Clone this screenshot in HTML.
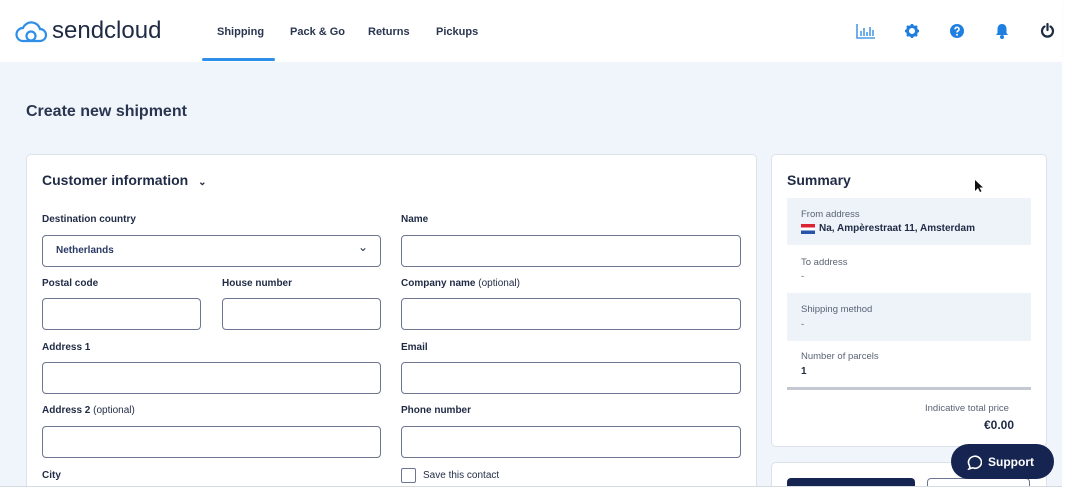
<!DOCTYPE html>
<html><head><meta charset="utf-8"><style>
*{box-sizing:border-box;margin:0;padding:0}
body{width:1073px;height:495px;overflow:hidden;background:#fff;font-family:"Liberation Sans",sans-serif;color:#1f2a44;position:relative}
.hdr{position:absolute;left:0;top:0;width:1062px;height:62px;background:#fff;box-shadow:0 1px 2px rgba(0,0,0,.05)}
.main{position:absolute;left:0;top:62px;width:1062px;height:425px;background:#f0f5fb;border-bottom:1px solid #d5d9e0;overflow:hidden}
.abs{position:absolute}
.nav{position:absolute;top:26px;font-size:11px;font-weight:bold;color:#2a3550}
.card{position:absolute;background:#fff;border:1px solid #dde2ea;border-radius:5px}
.lbl{position:absolute;font-size:10px;font-weight:bold;color:#1f2a44}
.lbl span{font-weight:normal}
.in{position:absolute;height:32px;border:1.5px solid #6d7690;border-radius:4px;background:#fff}
.sm{position:absolute;font-size:9.5px;color:#5a6275}
.sv{position:absolute;font-size:10px;font-weight:bold;color:#1f2a44}
</style></head><body>
<div class="hdr">
<svg class="abs" style="left:15px;top:21px" width="32" height="22" viewBox="0 0 32 22"><path d="M8 20 H25 A6 6 0 0 0 25 8 A9 9 0 0 0 8 7 A6.5 6.5 0 0 0 8 20 Z" fill="none" stroke="#2f8fe8" stroke-width="2.2"/><circle cx="16" cy="15" r="4.5" fill="none" stroke="#2f8fe8" stroke-width="2.2"/></svg>
<div class="abs" style="left:52px;top:17px;font-size:24px;color:#1f2a44">sendcloud</div>
<div class="nav" style="left:217px">Shipping</div>
<div class="nav" style="left:290px">Pack &amp; Go</div>
<div class="nav" style="left:368px">Returns</div>
<div class="nav" style="left:436px">Pickups</div>
<div class="abs" style="left:202px;top:58px;width:73px;height:3px;background:#2f8fe8;border-radius:2px"></div>
<svg class="abs" style="left:856px;top:23px" width="20" height="16" viewBox="0 0 20 16"><path d="M1 1V15H19M5 13V8M8 13V5M11 13V9M14 13V4M17 13V7" stroke="#4a9be8" stroke-width="1.6" fill="none"/></svg>
<svg class="abs" style="left:905px;top:24px" width="14" height="14" viewBox="0 0 14 14"><circle cx="7" cy="7" r="4.5" fill="none" stroke="#1f7fe0" stroke-width="3"/><path d="M7 0V3M7 11V14M0 7H3M11 7H14M2 2L4 4M10 10L12 12M12 2L10 4M2 12L4 10" stroke="#1f7fe0" stroke-width="2.4"/></svg>
<svg class="abs" style="left:950px;top:24px" width="14" height="14" viewBox="0 0 14 14"><circle cx="7" cy="7" r="7" fill="#1f7fe0"/><path d="M5 5.3A2 2 0 1 1 7.5 7.2C7 7.5 7 8 7 8.5" stroke="#fff" stroke-width="1.6" fill="none"/><circle cx="7" cy="10.8" r="1" fill="#fff"/></svg>
<svg class="abs" style="left:995px;top:23px" width="14" height="16" viewBox="0 0 14 16"><path d="M7 1C4 1 2.5 3.5 2.5 6V10L1 12H13L11.5 10V6C11.5 3.5 10 1 7 1Z" fill="#1f7fe0"/><circle cx="7" cy="14" r="2" fill="#1f7fe0"/></svg>
<svg class="abs" style="left:1040px;top:23px" width="15" height="15" viewBox="0 0 15 15"><path d="M4.5 3.5A5.5 5.5 0 1 0 10.5 3.5M7.5 1V7" stroke="#1f2a44" stroke-width="2.2" fill="none" stroke-linecap="round"/></svg>
</div>
<div class="main">
<div class="abs" style="left:26px;top:41px;font-size:16px;font-weight:bold;color:#2a3550">Create new shipment</div>
<div class="card" style="left:26px;top:92px;width:731px;height:360px">
<div class="abs" style="left:15px;top:17px;font-size:14px;font-weight:bold">Customer information <span style="font-size:10px;margin-left:6px">⌄</span></div>
</div>
<div class="card" style="left:771px;top:92px;width:276px;height:293px">
<div class="abs" style="left:15px;top:17px;font-size:14px;font-weight:bold">Summary</div>
<div class="abs" style="left:15px;top:43px;width:244px;height:47px;background:#eef3fa"></div>
<div class="abs" style="left:15px;top:138px;width:244px;height:48px;background:#eef3fa"></div>
<div class="abs" style="left:15px;top:232px;width:244px;height:3px;background:#c3c8d2"></div>
</div>
<div class="card" style="left:771px;top:400px;width:276px;height:60px"></div>
<div class="abs" style="left:787px;top:416px;width:128px;height:30px;background:#152451;border-radius:4px"></div>
<div class="abs" style="left:927px;top:416px;width:103px;height:30px;border:1px solid #6d7690;border-radius:4px;background:#fff"></div>
</div>
<div class="lbl" style="left:42px;top:214px">Destination country</div>
<div class="in" style="left:42px;top:235px;width:339px"><span class="abs" style="left:13px;top:9px;font-size:10px;font-weight:bold;color:#2a3a66">Netherlands</span><span class="abs" style="right:12px;top:4px;font-size:12px">⌄</span></div>
<div class="lbl" style="left:401px;top:214px">Name</div>
<div class="in" style="left:401px;top:235px;width:340px"></div>
<div class="lbl" style="left:42px;top:278px">Postal code</div>
<div class="lbl" style="left:222px;top:278px">House number</div>
<div class="lbl" style="left:401px;top:278px">Company name <span>(optional)</span></div>
<div class="in" style="left:42px;top:298px;width:159px"></div>
<div class="in" style="left:222px;top:298px;width:159px"></div>
<div class="in" style="left:401px;top:298px;width:340px"></div>
<div class="lbl" style="left:42px;top:342px">Address 1</div>
<div class="lbl" style="left:401px;top:342px">Email</div>
<div class="in" style="left:42px;top:362px;width:339px"></div>
<div class="in" style="left:401px;top:362px;width:340px"></div>
<div class="lbl" style="left:42px;top:405px">Address 2 <span>(optional)</span></div>
<div class="lbl" style="left:401px;top:405px">Phone number</div>
<div class="in" style="left:42px;top:426px;width:339px"></div>
<div class="in" style="left:401px;top:426px;width:340px"></div>
<div class="lbl" style="left:42px;top:470px">City</div>
<div class="abs" style="left:401px;top:468px;width:15px;height:15px;border:1.5px solid #6d7690;border-radius:2px;background:#fff"></div>
<div class="abs" style="left:423px;top:470px;font-size:10px">Save this contact</div>
<div class="sm" style="left:801px;top:209px">From address</div>
<div class="abs" style="left:801px;top:224px;width:14px;height:10px;background:linear-gradient(#d23 33%,#fff 33%,#fff 66%,#2654a8 66%)"></div>
<div class="sv" style="left:819px;top:223px">Na, Ampèrestraat 11, Amsterdam</div>
<div class="sm" style="left:801px;top:257px">To address</div>
<div class="sm" style="left:801px;top:271px">-</div>
<div class="sm" style="left:801px;top:304px">Shipping method</div>
<div class="sm" style="left:801px;top:319px">-</div>
<div class="sm" style="left:801px;top:351px">Number of parcels</div>
<div class="sv" style="left:801px;top:366px">1</div>
<div class="sm" style="left:925px;top:403px">Indicative total price</div>
<div class="abs" style="left:984px;top:418px;font-size:12px;font-weight:bold">€0.00</div>
<svg class="abs" style="left:974px;top:179px" width="10" height="14" viewBox="0 0 10 14"><path d="M1 1V12L4 9L6 13L7.5 12.3L5.5 8.5H9Z" fill="#111"/></svg>
<div class="abs" style="left:951px;top:444px;width:103px;height:35px;background:#152451;border-radius:18px;color:#fff;font-size:12px;font-weight:bold">
<svg class="abs" style="left:15px;top:10px" width="16" height="16" viewBox="0 0 16 16"><path d="M4 13.5L3 15L6.5 13.8A6.5 6 0 1 0 3.2 11Z" fill="none" stroke="#fff" stroke-width="1.6"/></svg>
<span class="abs" style="left:37px;top:11px">Support</span></div>
</body></html>
